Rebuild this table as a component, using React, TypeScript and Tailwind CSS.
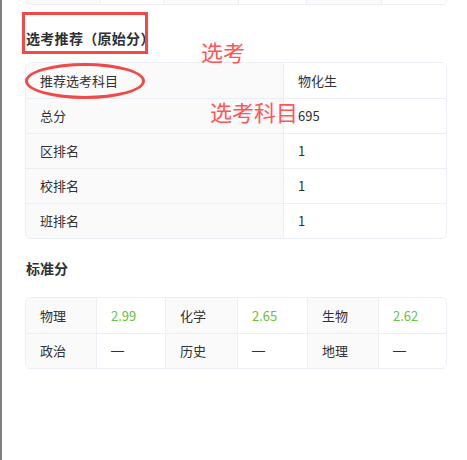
import React from "react";

const font = { fontFamily: '"Noto Sans CJK SC", "Noto Sans", sans-serif' };

function Cell({ children, gray, green, className = "" }: { children?: React.ReactNode; gray?: boolean; green?: boolean; className?: string }) {
  return (
    <div
      className={`flex items-center pl-[14px] text-[13px] ${gray ? "bg-[#fafafa]" : "bg-white"} ${green ? "text-[#67c23a]" : "text-[#303133]"} ${className}`}
    >
      {children}
    </div>
  );
}

function Val({ v, green, last }: { v: string; green: boolean; last?: boolean }) {
  return (
    <Cell green={green} className={last ? "" : "border-r border-[#ebeef5]"}>
      {v === "—" ? <span className="font-['Liberation_Sans',sans-serif]">—</span> : v}
    </Cell>
  );
}

export default function App() {
  const rows = [
    ["总分", "695"],
    ["区排名", "1"],
    ["校排名", "1"],
    ["班排名", "1"],
  ];
  const std: [string, string, boolean][][] = [
    [["物理", "2.99", true], ["化学", "2.65", true], ["生物", "2.62", true]],
    [["政治", "—", false], ["历史", "—", false], ["地理", "—", false]],
  ];
  return (
    <div className="relative h-[460px] w-[467px] overflow-hidden border-l-2 border-[#7f7f7f] bg-white" style={font}>
      <div className="pl-[23px] pr-[20px]">
        {/* partial top table */}
        <div className="grid h-[5px] grid-cols-[75px_63px_75px_68px_75px_1fr] overflow-hidden rounded-b-[6px] border-x border-b border-[#ebeef5]">
          <div className="border-r border-[#ebeef5] bg-[#fafafa]" />
          <div className="border-r border-[#ebeef5] bg-white" />
          <div className="border-r border-[#ebeef5] bg-[#fafafa]" />
          <div className="border-r border-[#ebeef5] bg-white" />
          <div className="border-r border-[#ebeef5] bg-[#fafafa]" />
          <div className="bg-white" />
        </div>

        <div className="mt-[23px] h-[20px] pl-[1px] text-[14px] font-bold leading-[20px] tracking-[0.3px] text-[#303133]">选考推荐（原始分）</div>

        <div className="mt-[14px] overflow-hidden rounded-[6px] border border-[#ebeef5]">
          <div className="grid h-[35px] grid-cols-[258px_1fr]">
            <Cell gray className="border-r border-[#ebeef5]">推荐选考科目</Cell>
            <Cell>物化生</Cell>
          </div>
          {rows.map(([k, v]) => (
            <div key={k} className="grid h-[35px] grid-cols-[258px_1fr] border-t border-[#ebeef5]">
              <Cell gray className="border-r border-[#ebeef5]">{k}</Cell>
              <Cell>{v}</Cell>
            </div>
          ))}
        </div>

        <div className="mt-[19px] h-[20px] pl-[1px] text-[14px] font-bold leading-[20px] text-[#303133]">标准分</div>

        <div className="mt-[19px] overflow-hidden rounded-[6px] border border-[#ebeef5]">
          {std.map((r, i) => (
            <div key={i} className={`grid h-[35px] grid-cols-[71px_69px_72px_70px_71px_1fr] ${i > 0 ? "border-t border-[#ebeef5]" : ""}`}>
              {r.map(([k, v, g], j) => (
                <React.Fragment key={k}>
                  <Cell gray className="border-r border-[#ebeef5]">{k}</Cell>
                  <Val v={v} green={g} last={j === 2} />
                </React.Fragment>
              ))}
            </div>
          ))}
        </div>
      </div>

      {/* annotations */}
      <div className="absolute left-[20px] top-[12px] h-[42px] w-[126px] border-[3px] border-[#f24848]" />
      <div className="absolute left-[23px] top-[63px] h-[36px] w-[120px] rounded-[50%] border-[3px] border-[#f24848]" />
      <div className="absolute left-[199px] top-[36px] text-[22px] leading-[30px] text-[#ff5555]">选考</div>
      <div className="absolute left-[208px] top-[96px] text-[22px] leading-[30px] text-[#ff5555]">选考科目</div>
    </div>
  );
}
